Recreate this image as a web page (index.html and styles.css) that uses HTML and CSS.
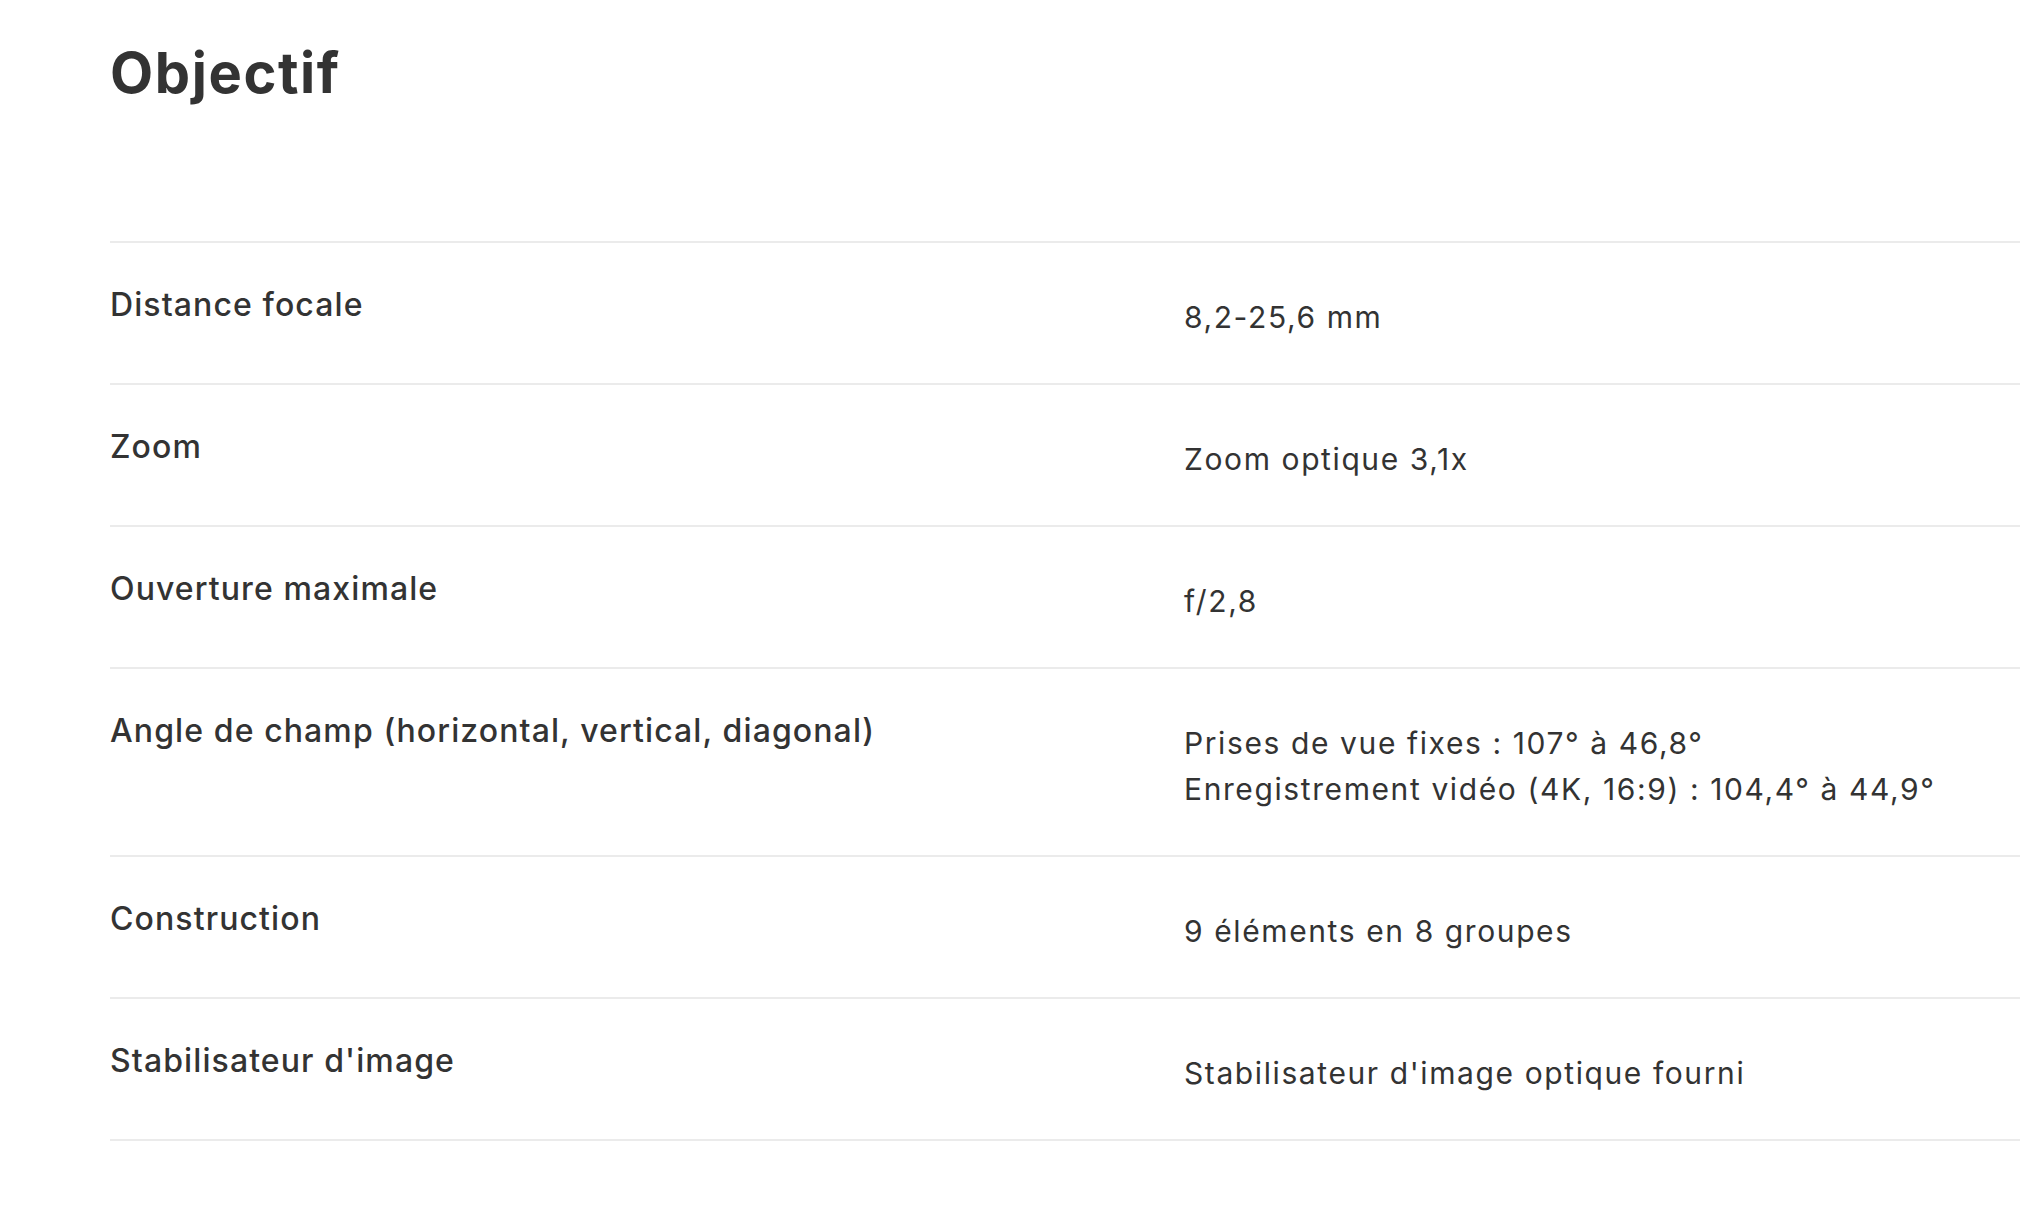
FILE: index.html
```html
<!DOCTYPE html>
<html lang="fr">
<head>
<meta charset="utf-8">
<title>Objectif</title>
<link rel="stylesheet" href="styles.css">
</head>
<body>
<section class="spec">
  <h1 class="spec-title">Objectif</h1>
  <div class="spec-table">
    <div class="spec-row">
      <div class="spec-label">Distance focale</div>
      <div class="spec-value">8,2-25,6 mm</div>
    </div>
    <div class="spec-row">
      <div class="spec-label">Zoom</div>
      <div class="spec-value">Zoom optique 3,1x</div>
    </div>
    <div class="spec-row">
      <div class="spec-label">Ouverture maximale</div>
      <div class="spec-value">f/2,8</div>
    </div>
    <div class="spec-row">
      <div class="spec-label">Angle de champ (horizontal, vertical, diagonal)</div>
      <div class="spec-value">Prises de vue fixes : 107° à 46,8°<br>Enregistrement vidéo (4K, 16:9) : 104,4° à 44,9°</div>
    </div>
    <div class="spec-row">
      <div class="spec-label">Construction</div>
      <div class="spec-value">9 éléments en 8 groupes</div>
    </div>
    <div class="spec-row">
      <div class="spec-label">Stabilisateur d'image</div>
      <div class="spec-value">Stabilisateur d'image optique fourni</div>
    </div>
  </div>
</section>
</body>
</html>
```
FILE: styles.css
```css
html, body {
  margin: 0;
  padding: 0;
  background: #ffffff;
}

body {
  font-family: Inter, "Noto Sans", "DejaVu Sans", sans-serif;
  color: #333333;
}

.spec {
  padding: 40px 0 0 110px;
}

.spec-title {
  margin: 0 0 134px 0;
  font-size: 56px;
  line-height: 67px;
  font-weight: 700;
  letter-spacing: 1.6px;
  color: #333333;
}

.spec-table {
  border-bottom: 2px solid #ebebeb;
}

.spec-row {
  display: grid;
  grid-template-columns: 1074px 1fr;
  align-items: start;
  border-top: 2px solid #ebebeb;
}

.spec-label {
  padding-top: 39px;
  font-size: 32px;
  line-height: 46px;
  font-weight: 500;
  letter-spacing: 1.1px;
}

.spec-value {
  padding: 51px 0 43px 0;
  font-size: 30px;
  line-height: 46px;
  font-weight: 400;
  letter-spacing: 1.6px;
}
```
